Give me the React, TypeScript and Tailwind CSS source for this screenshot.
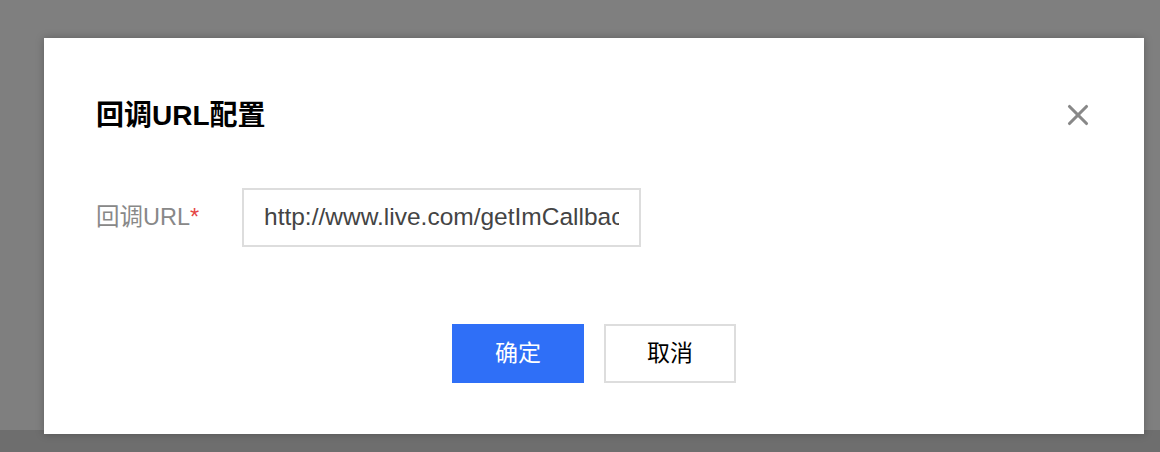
import { X } from 'lucide-react'

export default function App() {
  return (
    <div className="relative w-[1160px] h-[452px] flex flex-col overflow-hidden font-['Liberation_Sans','Noto_Sans_CJK_SC',sans-serif]">
      {/* Backdrop */}
      <div className="flex-1 bg-[#7f7f7f]" />
      <div className="h-[22px] bg-[#6e6e6e]" />

      {/* Dialog */}
      <div className="absolute left-[44px] top-[38px] w-[1100px] h-[396px] bg-white shadow-[0_0_8px_rgba(0,0,0,0.25)] flex flex-col px-[52px]">
        {/* Header */}
        <div className="flex items-center justify-between mt-[60px] h-[36px]">
          <h3 className="text-[28px] font-bold text-black">回调URL配置</h3>
          <button className="mr-[-3px] mt-[-2px] text-[#888888]">
            <X className="w-[34px] h-[34px]" strokeWidth={2.2} />
          </button>
        </div>

        {/* Form row */}
        <div className="flex items-center mt-[54px]">
          <label className="w-[146px] text-[23.5px] text-[#888888]">
            回调URL<span className="text-[#e54545]">*</span>
          </label>
          <div className="w-[399px] h-[59px] border-2 border-[#dddddd] flex items-center px-[20px]">
            <div className="flex-1 overflow-hidden">
              <span className="text-[24.5px] text-[#444444] whitespace-nowrap">http://www.live.com/getImCallback</span>
            </div>
          </div>
        </div>

        {/* Footer */}
        <div className="flex justify-center gap-[20px] mt-[77px]">
          <button className="w-[132px] h-[59px] bg-[#2f6ff7] text-white text-[23px]">确定</button>
          <button className="w-[132px] h-[59px] bg-white border-2 border-[#dddddd] text-black text-[23px]">取消</button>
        </div>
      </div>
    </div>
  )
}
